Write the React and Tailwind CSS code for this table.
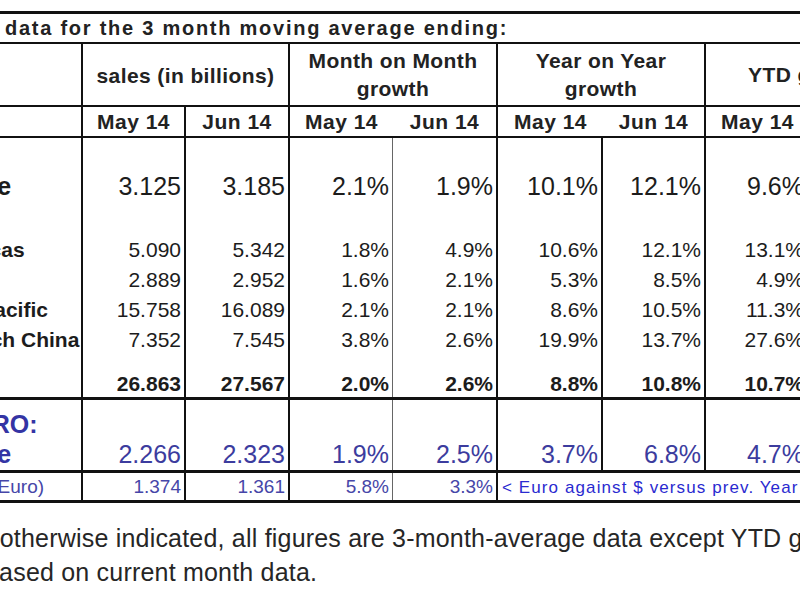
import React from "react";

const W = [
  "w-[161px]",
  "w-[103px]",
  "w-[104px]",
  "w-[103px]",
  "w-[105px]",
  "w-[105px]",
  "w-[103px]",
  "w-[103px]",
  "w-[103px]",
];

const DATA_B = [
  "border-r-2 border-[#111]",
  "border-r-2 border-[#111]",
  "border-r-2 border-[#111]",
  "border-r border-[#666]",
  "border-r-2 border-[#111]",
  "border-r-2 border-[#111]",
  "border-r-2 border-[#111]",
  "border-r-2 border-[#111]",
  "border-r-2 border-[#111]",
];

const HEAD2_B = [
  "border-r-2 border-[#111]",
  "border-r-2 border-[#111]",
  "border-r-2 border-[#111]",
  "",
  "border-r-2 border-[#111]",
  "",
  "border-r-2 border-[#111]",
  "",
  "border-r-2 border-[#111]",
];

function Row({ h, cells = [], label, labelCls = "", valCls = "", align = "items-center" }) {
  return (
    <div className={`flex ${h}`}>
      {W.map((w, i) => (
        <div
          key={i}
          className={`${w} shrink-0 h-full flex ${align} ${DATA_B[i]} ${
            i === 0 ? "justify-start pl-[8px] whitespace-nowrap overflow-hidden" : "justify-end pr-[3px]"
          }`}
        >
          {i === 0 ? (
            <span className={labelCls}>{label}</span>
          ) : (
            <span className={valCls}>{cells[i - 1]}</span>
          )}
        </div>
      ))}
    </div>
  );
}

export default function App() {
  return (
    <div className="w-[800px] h-[600px] overflow-hidden bg-white font-['Liberation_Sans',Arial,sans-serif] text-[#1c1c1c]">
      <div className="ml-[-78px] w-[1100px] pt-[11px]">
        {/* title */}
        <div className="h-[33px] border-t-[3px] border-b-2 border-[#111] pl-[83px] text-[20px] leading-[28px] font-bold tracking-[1.75px] text-[#222] whitespace-nowrap">
          data for the 3 month moving average ending:
        </div>

        {/* header row 1 */}
        <div className="flex h-[63px] border-b-2 border-[#111] text-[21px] font-bold tracking-[0.4px] text-[#222] text-center">
          <div className="w-[161px] shrink-0 h-full border-r-2 border-[#111]"></div>
          <div className="w-[207px] shrink-0 h-full border-r-2 border-[#111] flex items-center justify-center pt-[3px]">
            sales (in billions)
          </div>
          <div className="w-[208px] shrink-0 h-full border-r-2 border-[#111] flex flex-col items-center justify-center leading-[28px]">
            <span>Month on Month</span>
            <span>growth</span>
          </div>
          <div className="w-[208px] shrink-0 h-full border-r-2 border-[#111] flex flex-col items-center justify-center leading-[28px]">
            <span>Year on Year</span>
            <span>growth</span>
          </div>
          <div className="w-[206px] shrink-0 h-full flex items-center justify-center">
            YTD growth
          </div>
        </div>

        {/* header row 2 */}
        <div className="flex h-[31px] border-b-2 border-[#111] text-[21px] font-bold tracking-[0.5px] text-[#222]">
          {W.map((w, i) => (
            <div
              key={i}
              className={`${w} shrink-0 h-full flex items-center justify-center ${HEAD2_B[i]}`}
            >
              {i === 0 ? "" : i % 2 === 1 ? "May 14" : "Jun 14"}
            </div>
          ))}
        </div>

        {/* data block */}
        <div className="flex flex-col border-b-[3px] border-[#111]">
          <Row
            h="h-[62px]"
            align="items-end"
            label="Europe"
            labelCls="ml-[-5px] text-[25px] leading-[28px] font-bold"
            valCls="text-[25px] leading-[28px]"
            cells={["3.125", "3.185", "2.1%", "1.9%", "10.1%", "12.1%", "9.6%", "10.2%"]}
          />
          <Row h="h-[35px]" />
          <Row
            h="h-[30px]"
            label="Americas"
            labelCls="text-[21px] font-bold"
            valCls="text-[21px]"
            cells={["5.090", "5.342", "1.8%", "4.9%", "10.6%", "12.1%", "13.1%", "12.9%"]}
          />
          <Row
            h="h-[30px]"
            label="Japan"
            labelCls="text-[21px] font-bold"
            valCls="text-[21px]"
            cells={["2.889", "2.952", "1.6%", "2.1%", "5.3%", "8.5%", "4.9%", "5.5%"]}
          />
          <Row
            h="h-[30px]"
            label="Asia Pacific"
            labelCls="text-[21px] font-bold"
            valCls="text-[21px]"
            cells={["15.758", "16.089", "2.1%", "2.1%", "8.6%", "10.5%", "11.3%", "11.1%"]}
          />
          <Row
            h="h-[30px]"
            label="of which China"
            labelCls="text-[21px] font-bold"
            valCls="text-[21px]"
            cells={["7.352", "7.545", "3.8%", "2.6%", "19.9%", "13.7%", "27.6%", "24.6%"]}
          />
          <Row h="h-[16px]" />
          <Row
            h="h-[26px]"
            label="Total"
            labelCls="text-[21px] font-bold"
            valCls="text-[21px] font-bold leading-[26px]"
            cells={["26.863", "27.567", "2.0%", "2.6%", "8.8%", "10.8%", "10.7%", "10.7%"]}
          />
        </div>

        {/* EURO block */}
        <div className="flex flex-col border-b-[3px] border-[#111] text-[#3c3c9e]">
          <Row h="h-[10px]" />
          <Row
            h="h-[30px]"
            label="IN EURO:"
            labelCls="ml-[-5px] text-[25px] font-bold text-[#3434a4]"
          />
          <Row
            h="h-[30px]"
            label="Europe"
            labelCls="ml-[-5px] text-[25px] font-bold text-[#3434a4]"
            valCls="text-[25px]"
            cells={["2.266", "2.323", "1.9%", "2.5%", "3.7%", "6.8%", "4.7%", "6.3%"]}
          />
        </div>

        {/* exchange row */}
        <div className="flex h-[30px] border-b-[3px] border-[#111] text-[19px] text-[#4646a8]">
          {W.slice(0, 5).map((w, i) => (
            <div
              key={i}
              className={`${w} shrink-0 h-full flex items-center pt-[2px] ${DATA_B[i]} ${
                i === 0 ? "justify-start pl-[8px] whitespace-nowrap overflow-hidden" : "justify-end pr-[3px]"
              }`}
            >
              {["Rate ($/Euro)", "1.374", "1.361", "5.8%", "3.3%"][i]}
            </div>
          ))}
          <div className="flex-1 h-full flex items-center pt-[2px] pl-[4px] text-[17px] tracking-[1.1px] text-[#2a2ad0] whitespace-nowrap">
            &lt; Euro against $ versus prev. Year
          </div>
        </div>

        {/* footnote */}
        <div className="mt-[18px] text-[25px] leading-[34px] tracking-[0.2px] text-[#262626] whitespace-nowrap">
          <div className="ml-[-7px]">
            Unless otherwise indicated, all figures are 3-month-average data except YTD growth
          </div>
          <div className="ml-[63px]">based on current month data.</div>
        </div>
      </div>
    </div>
  );
}
